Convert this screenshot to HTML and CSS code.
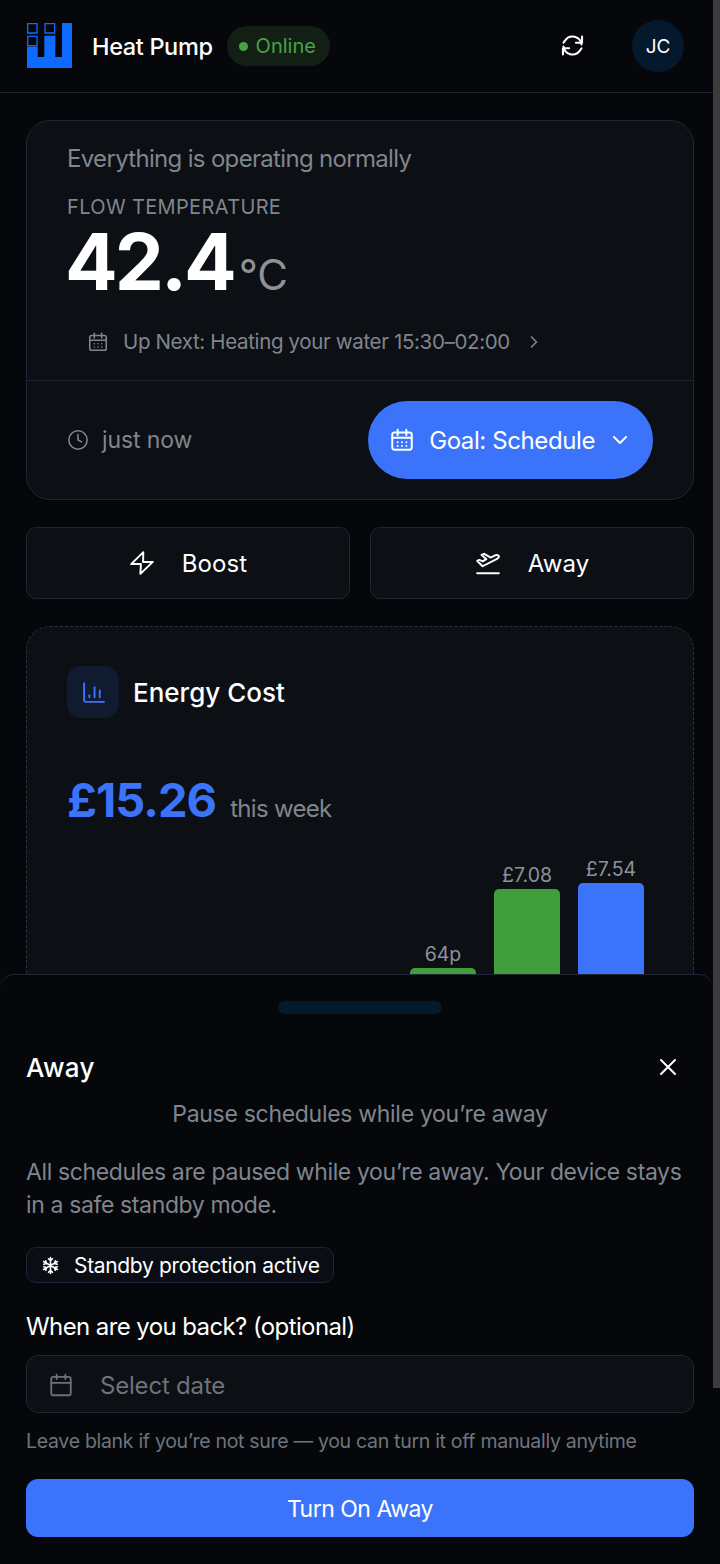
FILE: index.html
```html
<!DOCTYPE html>
<html lang="en">
<head>
  <meta charset="UTF-8">
  <title>Heat Pump</title>
  <link rel="stylesheet" href="styles.css">
</head>
<body>
  <div class="app">
    <header class="topbar">
      <svg class="logo" viewBox="0 0 45 45">
        <path class="logo-solid" d="M0 23.500h10.700V34h6.600V12.700h11V34H35V0h10V45H0z"/>
        <path class="logo-box" d="M.7.700h9.300V10H.7zM18 .7h9.600V10H18zM.7 13.400h9.300v9.300H.7z"/>
      </svg>
      <span class="brand">Heat Pump</span>
      <span class="status"><i class="dot"></i>Online</span>
      <svg class="refresh" viewBox="0 0 24 24">
        <path d="M20 11a8 8 0 0 0-14.500-3.500L4 9.500M4 13a8 8 0 0 0 14.500 3.500L20 14.500"/>
        <path d="M20.500 4v5.500H15M3.500 20v-5.500H9"/>
      </svg>
      <span class="avatar">JC</span>
    </header>

    <main class="content">
      <section class="card status-card">
        <div class="status-top">
          <p class="summary">Everything is operating normally</p>
          <p class="eyebrow">FLOW TEMPERATURE</p>
          <p class="temp">42.4<span class="unit">°C</span></p>
          <p class="next">
            <svg class="icon-sm" viewBox="0 0 24 24"><rect x="3" y="5" width="18" height="16" rx="2"/><path d="M8 2.500v5M16 2.500v5M3 10h18M8 14h.01M12 14h.01M16 14h.01M8 17.500h.01M12 17.500h.01M16 17.500h.01"/></svg>
            <span>Up Next: Heating your water 15:30–02:00</span>
            <svg class="chev-right" viewBox="0 0 24 24"><path d="m9 6 6 6-6 6"/></svg>
          </p>
        </div>
        <div class="status-bottom">
          <span class="updated">
            <svg class="icon-sm" viewBox="0 0 24 24"><circle cx="12" cy="12" r="10"/><path d="M12 6v6l4 2"/></svg>
            just now
          </span>
          <button class="goal">
            <svg class="icon-md" viewBox="0 0 24 24"><rect x="3" y="5" width="18" height="16" rx="2"/><path d="M8 2.500v5M16 2.500v5M3 10h18M8 14h.01M12 14h.01M16 14h.01M8 17.500h.01M12 17.500h.01M16 17.500h.01"/></svg>
            <span>Goal: Schedule</span>
            <svg class="chev-down" viewBox="0 0 24 24"><path d="m6 9 6 6 6-6"/></svg>
          </button>
        </div>
      </section>

      <div class="actions">
        <button class="action">
          <svg class="icon-md" viewBox="0 0 24 24"><path d="M13.200 2 2 13h9l-.5 9L22 11h-9z"/></svg>
          Boost
        </button>
        <button class="action">
          <svg class="icon-md" viewBox="0 0 24 24"><path d="M2 21.500h20M3.500 11.500 2 10l2-1 3 1.500 3.500-2L6 4.500l2.500-1 6 3.500 4-2c1.500-.7 3.200-.3 3.500.6.300 1-.6 1.900-1.700 2.500L7 15z"/></svg>
          Away
        </button>
      </div>

      <section class="card energy">
        <div class="energy-head">
          <span class="energy-icon">
            <svg viewBox="0 0 24 24"><path d="M3 3v16.500a1.500 1.500 0 0 0 1.500 1.500H22M8 16.500v-2M13 16.500V7M18 16.500V10"/></svg>
          </span>
          <h2>Energy Cost</h2>
        </div>
        <p class="total"><strong>£15.26</strong> this week</p>
        <div class="chart">
          <div class="col"><span>64p</span><i class="bar green b1"></i></div>
          <div class="col"><span>£7.08</span><i class="bar green b2"></i></div>
          <div class="col"><span>£7.54</span><i class="bar blue b3"></i></div>
        </div>
      </section>
    </main>
  </div>

  <div class="sheet">
    <div class="handle"></div>
    <div class="sheet-head">
      <h3>Away</h3>
      <svg class="close" viewBox="0 0 24 24"><path d="M5 5l14 14M19 5 5 19"/></svg>
    </div>
    <p class="sheet-sub">Pause schedules while you’re away</p>
    <p class="sheet-text">All schedules are paused while you’re away. Your device stays in a safe standby mode.</p>
    <span class="chip">
      <svg class="snow" viewBox="0 0 24 24"><path d="M12 2v20M3.300 7l17.400 10M20.700 7 3.300 17M9.500 3.500 12 6l2.500-2.500M9.500 20.500 12 18l2.500 2.500M3.500 10.500 7 9.500 6 6M20.500 13.500 17 14.500l1 3.500M20.500 10.500 17 9.500l1-3.500M3.500 13.500l3.500 1L6 18"/></svg>
      Standby protection active
    </span>
    <label class="field-label">When are you back? (optional)</label>
    <div class="date-input">
      <svg class="icon-lg" viewBox="0 0 24 24"><rect x="3" y="4.500" width="18" height="17" rx="2"/><path d="M8 2.500v4M16 2.500v4M3 10h18"/></svg>
      <span>Select date</span>
    </div>
    <p class="hint">Leave blank if you’re not sure — you can turn it off manually anytime</p>
    <button class="primary">Turn On Away</button>
  </div>

  <div class="scroll-thumb"></div>
</body>
</html>
```

FILE: styles.css
```css
* {
  box-sizing: border-box;
}
html, body {
  margin: 0;
  height: 1564px;
  overflow: hidden;
}
body {
  position: relative;
  background: #05070b;
  color: #fff;
  font-family: Inter, "Liberation Sans", sans-serif;
}
p, h2, h3 {
  margin: 0;
  font-weight: inherit;
}
button {
  font-family: inherit;
  color: inherit;
  cursor: pointer;
}
svg {
  fill: none;
  stroke: currentColor;
  stroke-width: 2;
  stroke-linecap: round;
  stroke-linejoin: round;
  flex: none;
}

.app {
  width: 713px;
  height: 1564px;
}
.topbar {
  display: flex;
  align-items: center;
  height: 93px;
  padding: 0 29px 0 27px;
  border-bottom: 1px solid #1f2431;
}
.logo {
  width: 45px;
  height: 45px;
  margin-top: -1px;
}
.logo-solid {
  fill: #0f6bff;
  stroke: none;
}
.logo-box {
  stroke: #0f6bff;
  stroke-width: 1.3;
  stroke-linecap: butt;
  stroke-linejoin: miter;
}
.brand {
  margin-left: 20px;
  font-size: 23.500px;
  font-weight: 500;
  letter-spacing: -0.35px;
}
.status {
  display: flex;
  align-items: center;
  gap: 8px;
  height: 40px;
  margin-left: 14px;
  padding: 0 14px 0 12px;
  border-radius: 20px;
  background: #131f15;
  color: #46a343;
  font-size: 20px;
}
.dot {
  width: 9px;
  height: 9px;
  border-radius: 50%;
  background: #46a343;
}
.refresh {
  width: 27px;
  height: 27px;
  margin: -2px 0 0 auto;
  stroke-width: 1.8;
}
.avatar {
  display: flex;
  align-items: center;
  justify-content: center;
  width: 52px;
  height: 52px;
  margin-left: 46px;
  border-radius: 50%;
  background: #04182e;
  font-size: 19px;
}

.content {
  display: flex;
  flex-direction: column;
  padding: 27px 19px 0 26px;
}
.card {
  border: 1px solid #1e2636;
  border-radius: 24px;
  background: #0c0f14;
}
.status-card {
  height: 380px;
}
.status-top {
  height: 260px;
  padding: 20px 40px 0;
  border-bottom: 1px solid #1e2636;
}
.summary {
  color: #80858e;
  font-size: 24px;
  line-height: 36px;
  letter-spacing: -0.68px;
}
.eyebrow {
  margin-top: 18px;
  color: #80858e;
  font-size: 20px;
  line-height: 24px;
  letter-spacing: 0.35px;
}
.temp {
  margin: 11px 0 0 -2px;
  font-size: 78px;
  font-weight: 700;
  line-height: 64px;
  letter-spacing: -3px;
}
.unit {
  margin-left: 5px;
  color: #8d9299;
  font-size: 42px;
  font-weight: 400;
  line-height: 1;
  letter-spacing: 0;
}
.next {
  display: flex;
  align-items: center;
  gap: 14px;
  margin: 32px 0 0 20px;
  color: #80858e;
  font-size: 20.500px;
  line-height: 28px;
  letter-spacing: -0.35px;
}
.icon-sm {
  width: 22px;
  height: 22px;
  stroke-width: 1.7;
}
.chev-right {
  width: 20px;
  height: 20px;
  stroke-width: 2;
}
.status-bottom {
  display: flex;
  align-items: center;
  justify-content: space-between;
  height: 118px;
  padding: 0 40px;
}
.updated {
  display: flex;
  align-items: center;
  gap: 13px;
  color: #80858e;
  font-size: 23px;
  letter-spacing: -0.1px;
}
.goal {
  display: flex;
  align-items: center;
  height: 78px;
  padding: 0 21px;
  border: 0;
  border-radius: 39px;
  background: #3b74fb;
  font-size: 24px;
}
.goal .icon-md {
  margin-right: 14px;
}
.goal span {
  letter-spacing: -0.4px;
}
.icon-md {
  width: 26px;
  height: 26px;
  stroke-width: 1.8;
}
.chev-down {
  width: 24px;
  height: 24px;
  margin-left: 13px;
}

.actions {
  display: grid;
  grid-template-columns: 1fr 1fr;
  gap: 20px;
  margin-top: 27px;
}
.action {
  display: flex;
  align-items: center;
  justify-content: center;
  gap: 27px;
  height: 72px;
  border: 1px solid #1e2636;
  border-radius: 10px;
  background: #0c0f14;
  font-size: 24px;
  letter-spacing: 0.1px;
}

.energy {
  height: 500px;
  margin-top: 27px;
  padding: 39px 40px 0;
  border: 1px dashed #263044;
}
.energy-head {
  display: flex;
  align-items: center;
  gap: 14px;
}
.energy-head h2 {
  font-size: 26px;
  font-weight: 500;
  letter-spacing: 0;
}
.energy-icon {
  display: flex;
  align-items: center;
  justify-content: center;
  width: 52px;
  height: 52px;
  border-radius: 14px;
  background: #101b30;
  color: #3b74fb;
}
.energy-icon svg {
  width: 25px;
  height: 25px;
  stroke-width: 1.8;
}
.total {
  margin-top: 58px;
  color: #80858e;
  font-size: 24px;
  line-height: 60px;
  letter-spacing: -0.7px;
}
.total strong {
  margin-right: 8px;
  color: #3b74fb;
  font-size: 47px;
  font-weight: 700;
  line-height: 1;
  letter-spacing: -1px;
}
.chart {
  display: flex;
  justify-content: flex-end;
  align-items: flex-end;
  gap: 18px;
  height: 132px;
  margin-top: 15px;
  padding-right: 9px;
}
.col {
  display: flex;
  flex-direction: column;
  align-items: center;
  width: 66px;
  color: #8d9299;
  font-size: 19.500px;
}
.col span {
  margin-bottom: 1px;
  line-height: 26px;
}
.bar {
  width: 100%;
  border-radius: 5px 5px 0 0;
}
.green {
  background: #409f3c;
}
.blue {
  background: #3b74fb;
}
.b1 {
  height: 18px;
}
.b2 {
  height: 97px;
}
.b3 {
  height: 103px;
}

.sheet {
  position: absolute;
  left: 0;
  bottom: 0;
  display: flex;
  flex-direction: column;
  align-items: flex-start;
  width: 713px;
  height: 590px;
  padding: 0 19px 27px 26px;
  border-top: 1px solid #1e2636;
  border-radius: 14px 14px 0 0;
  background: #05070b;
}
.handle {
  align-self: center;
  width: 164px;
  height: 13px;
  margin-top: 26px;
  border-radius: 7px;
  background: #04182e;
}
.sheet-head {
  display: flex;
  align-items: center;
  justify-content: space-between;
  align-self: stretch;
  margin-top: 38px;
  padding-right: 14px;
}
.sheet-head h3 {
  font-size: 26px;
  font-weight: 500;
  line-height: 32px;
  letter-spacing: 0.3px;
}
.close {
  width: 24px;
  height: 24px;
  margin-bottom: 2px;
}
.sheet-sub {
  align-self: center;
  margin-top: 13px;
  color: #80858e;
  font-size: 23px;
  line-height: 34px;
  letter-spacing: -0.3px;
}
.sheet-text {
  margin-top: 25px;
  color: #80858e;
  font-size: 23px;
  line-height: 33px;
  letter-spacing: -0.37px;
}
.chip {
  display: flex;
  align-items: center;
  gap: 14px;
  height: 36px;
  margin-top: 25px;
  padding: 1px 13px 0 14px;
  border: 1px solid #1e2636;
  border-radius: 10px;
  background: #0a0d13;
  font-size: 21px;
  letter-spacing: -0.33px;
}
.snow {
  width: 19px;
  height: 19px;
  stroke-width: 2;
}
.field-label {
  margin-top: 27px;
  font-size: 24px;
  line-height: 34px;
  letter-spacing: -0.6px;
}
.date-input {
  display: flex;
  align-items: center;
  gap: 26px;
  align-self: stretch;
  height: 59px;
  margin-top: 11px;
  padding: 2px 21px 0;
  border: 1px solid #1e2636;
  border-radius: 12px;
  background: #0c0f14;
  color: #6d727c;
  font-size: 24px;
  letter-spacing: -0.2px;
}
.icon-lg {
  width: 26px;
  height: 26px;
  stroke-width: 1.7;
}
.hint {
  margin-top: 14px;
  color: #6f747d;
  font-size: 19.500px;
  line-height: 28px;
  letter-spacing: -0.3px;
}
.primary {
  align-self: stretch;
  height: 58px;
  margin-top: 24px;
  padding-top: 3px;
  border: 0;
  border-radius: 12px;
  background: #3b74fb;
  font-size: 23px;
  letter-spacing: -0.5px;
}

.scroll-thumb {
  position: absolute;
  top: 0;
  right: 0;
  width: 7px;
  height: 1388px;
  background: #3c3c3c;
}
```
